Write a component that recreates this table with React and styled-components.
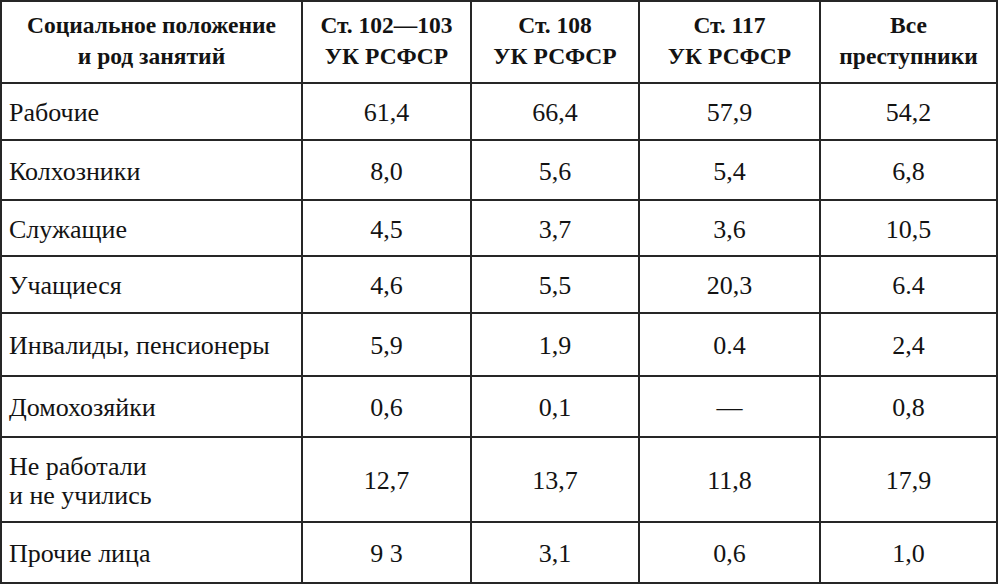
import React from "react";
import styled, { createGlobalStyle } from "styled-components";

const Global = createGlobalStyle`
  html, body { margin: 0; padding: 0; background: #ffffff; }
`;

const Table = styled.div`
  display: grid;
  width: 998px;
  box-sizing: border-box;
  grid-template-columns: 299px 167px 166px 179px 175px;
  grid-template-rows: 80px 55px 58px 54px 55px 61px 59px 83px 59px;
  gap: 2px;
  padding: 2px;
  background: #262626;
  font-family: "Liberation Serif", "Times New Roman", serif;
  color: #131313;
`;

const Cell = styled.div`
  background: #ffffff;
  display: flex;
  flex-direction: column;
  justify-content: center;
  align-items: ${(p) => (p.$label ? "flex-start" : "center")};
  text-align: ${(p) => (p.$label ? "left" : "center")};
  padding: ${(p) => (p.$label ? "2px 0 0 7px" : "2px 0 0 0")};
  font-family: "Liberation Serif", "Times New Roman", serif;
  font-size: 26px;
  line-height: 29px;
`;

const HeadCell = styled.div`
  background: #ffffff;
  display: flex;
  flex-direction: column;
  justify-content: center;
  align-items: center;
  text-align: center;
  font-family: "Liberation Serif", "Times New Roman", serif;
  font-weight: bold;
  font-size: 23.5px;
  line-height: 31px;
  padding-bottom: 2px;
`;

const header = [
  ["Социальное положение", "и род занятий"],
  ["Ст. 102—103", "УК РСФСР"],
  ["Ст. 108", "УК РСФСР"],
  ["Ст. 117", "УК РСФСР"],
  ["Все", "преступники"],
];

const rows = [
  [["Рабочие"], "61,4", "66,4", "57,9", "54,2"],
  [["Колхозники"], "8,0", "5,6", "5,4", "6,8"],
  [["Служащие"], "4,5", "3,7", "3,6", "10,5"],
  [["Учащиеся"], "4,6", "5,5", "20,3", "6.4"],
  [["Инвалиды, пенсионеры"], "5,9", "1,9", "0.4", "2,4"],
  [["Домохозяйки"], "0,6", "0,1", "—", "0,8"],
  [["Не работали", "и не учились"], "12,7", "13,7", "11,8", "17,9"],
  [["Прочие лица"], "9 3", "3,1", "0,6", "1,0"],
];

export default function App() {
  return (
    <>
      <Global />
      <Table>
        {header.map((lines, i) => (
          <HeadCell key={"h" + i}>
            {lines.map((l, j) => (
              <span key={j}>{l}</span>
            ))}
          </HeadCell>
        ))}
        {rows.map((r, i) => (
          <React.Fragment key={i}>
            <Cell $label>
              {r[0].map((l, j) => (
                <span key={j}>{l}</span>
              ))}
            </Cell>
            {r.slice(1).map((v, j) => (
              <Cell key={j}>{v}</Cell>
            ))}
          </React.Fragment>
        ))}
      </Table>
    </>
  );
}
